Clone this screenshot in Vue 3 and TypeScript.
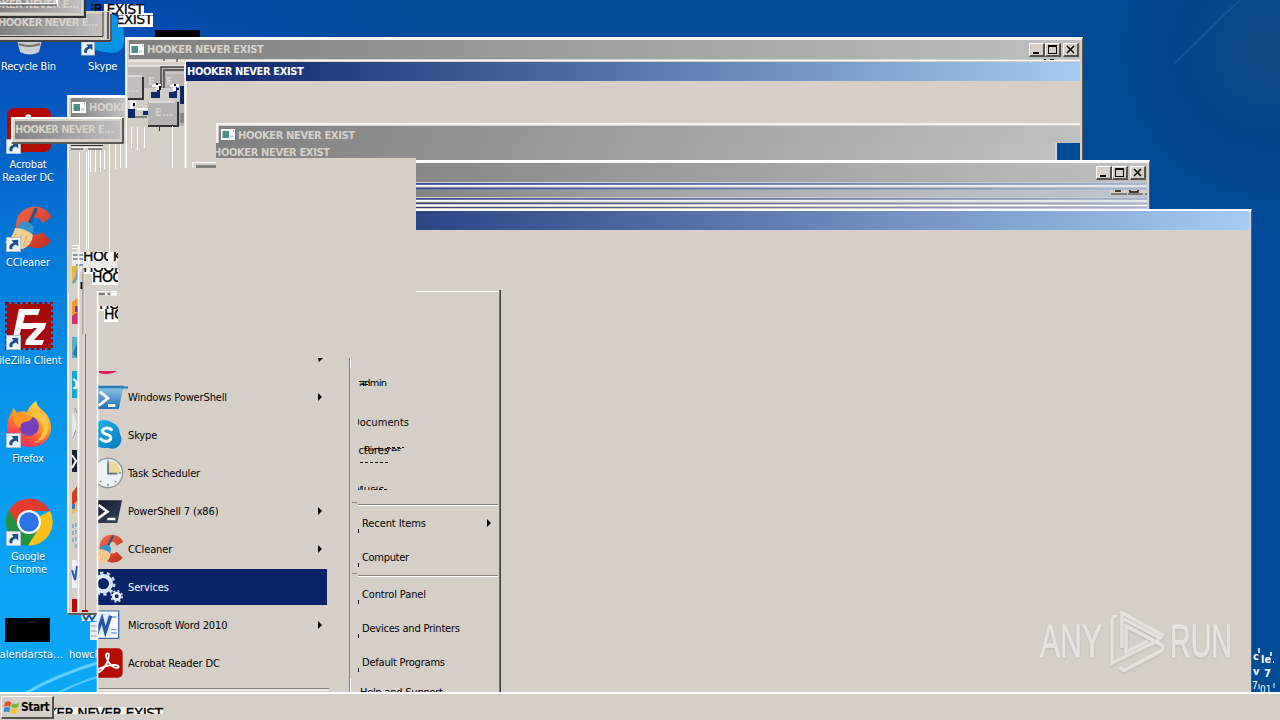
<script setup lang="ts">
interface MenuEntry { label: string; icon: string; arrow?: boolean; active?: boolean }
const programs: MenuEntry[] = [
  { label: 'Windows PowerShell', icon: 'wps', arrow: true },
  { label: 'Skype', icon: 'skype' },
  { label: 'Task Scheduler', icon: 'clock' },
  { label: 'PowerShell 7 (x86)', icon: 'ps7', arrow: true },
  { label: 'CCleaner', icon: 'cc', arrow: true },
  { label: 'Services', icon: 'gears', active: true },
  { label: 'Microsoft Word 2010', icon: 'word', arrow: true },
  { label: 'Acrobat Reader DC', icon: 'pdf' },
]
interface Shortcut { lines: string[]; icon: string; cls: string }
const shortcuts: Shortcut[] = [
  { lines: ['Acrobat', 'Reader DC'], icon: 'pdf', cls: 's1' },
  { lines: ['CCleaner'], icon: 'cc', cls: 's2' },
  { lines: ['FileZilla Client'], icon: 'fz', cls: 's3' },
  { lines: ['Firefox'], icon: 'ff', cls: 's4' },
  { lines: ['Google', 'Chrome'], icon: 'chrome', cls: 's5' },
]
const title = 'HOOKER NEVER EXIST'
const whiteLines: number[][] = [
  [79, 152, 250], [86, 152, 250], [88, 150, 250], [109, 150, 266],
  [90, 150, 172], [95, 150, 172], [100, 150, 172], [104, 150, 169], [109, 144, 169], [115, 144, 169], [120, 144, 169],
  [131, 127, 148], [137, 127, 150], [144, 127, 148], [172, 126, 169],
]
const stripes: [number, string][] = [
  [182, '#d9d9e4'], [183, '#34449a'], [184, '#4a66ac'], [185, '#fff'], [186, '#d5cfc8'], [188, '#34489b'], [189, '#6380b5'],
  [197, '#dcd9d6'], [198, '#34449a'], [199, '#6670a4'], [200, '#fff'], [201, '#d5cfc8'], [203, '#343c88'], [204, '#d5cfc8'],
  [205, '#fff'], [206, '#d5cfc8'], [207, '#343c88'], [208, '#d5cfc8'],
]
</script>

<template>
  <div class="desktop">
    <svg width="0" height="0" class="defs">
      <defs>
        <linearGradient id="gInactive" x1="0" x2="1"><stop offset="0" stop-color="#808080" /><stop offset="1" stop-color="#c0c0c0" /></linearGradient>
        <linearGradient id="gSkype" x1="0" y1="0" x2="1" y2="1"><stop offset="0" stop-color="#22b9f0" /><stop offset="1" stop-color="#0778bb" /></linearGradient>
        <linearGradient id="gFox" x1=".8" y1="0" x2=".3" y2="1"><stop offset="0" stop-color="#ffe14a" /><stop offset=".45" stop-color="#ff9a28" /><stop offset=".8" stop-color="#ff4546" /><stop offset="1" stop-color="#e22c77" /></linearGradient>
        <linearGradient id="gWps" x1="0" y1="0" x2="0" y2="1"><stop offset="0" stop-color="#8cc6e8" /><stop offset="1" stop-color="#1f6fb4" /></linearGradient>
        <linearGradient id="gCc" x1="0" y1="0" x2="1" y2="1"><stop offset="0" stop-color="#f26a4c" /><stop offset="1" stop-color="#c52a1c" /></linearGradient>
        <linearGradient id="gDark" x1="0" y1="0" x2="1" y2="1"><stop offset="0" stop-color="#10162a" /><stop offset="1" stop-color="#37445e" /></linearGradient>
      </defs>
      <symbol id="pdf" viewBox="0 0 48 48">
        <rect x="2" y="2" width="44" height="44" rx="7" fill="#b30b00" />
        <path d="M22 10q4-2 3 5c-1 7-6 16-12 21q-5 4-5 0c1-4 12-8 22-9 8-1 12 2 9 4-5 2-14-5-17-14-1-3-1-6 0-7z" fill="none" stroke="#fff" stroke-width="2.7" />
      </symbol>
      <symbol id="cc" viewBox="0 0 48 48">
        <path d="M47 13Q39 0 26 3C11 6 8 22 14 34c7 12 23 14 32 3l-9-9q-6 5-11 1c-5-5-3-13 2-15q6-2 9 5z" fill="url(#gCc)" />
        <path d="M31 5l-9 19" stroke="#29577e" stroke-width="3" stroke-linecap="round" />
        <path d="M15 19q8-4 14 4l-2 8-16-5z" fill="#3595cb" />
        <path d="M10 24q10 0 18 7-1 10-10 14Q8 46 0 38q7-2 10-14z" fill="#f0cd91" />
        <path d="M11 29L7 40M17 30l-3 12M22 32l-4 10" stroke="#d9ad70" />
      </symbol>
      <symbol id="fz" viewBox="0 0 48 48">
        <rect x="2" y="2" width="44" height="44" fill="#a80b0d" /><rect x="1" y="1" width="46" height="46" fill="none" stroke="#8d0808" stroke-width="2" stroke-dasharray="3 2.5" />
        <path d="M14 7h21l-2 6H20l-2 8h12l-2 6H16l-3 13H7z" fill="#fff" />
        <path d="M24 21h17l-1 5-11 12h10l-2 5H20l1-5 11-12h-9z" fill="#fff" />
      </symbol>
      <symbol id="ff" viewBox="0 0 48 48">
        <path d="M31 1q1 5 5 8c14 10 13 29-1 36C21 51 4 43 2 29q0-11 5-17l1-4q3 2 4 5 5-3 10-1 3-7 9-11z" fill="url(#gFox)" />
        <circle cx="24" cy="26" r="10" fill="#7440bd" />
        <path d="M6 14q9-4 16 1l6 1q-1 5-8 6-6 1-4 6Q8 26 6 14z" fill="#ff9427" />
        <path d="M25 16q13 0 13 14-1 9-10 13c18-2 20-23 7-31q-5-2-10 4z" fill="#ffc53d" />
      </symbol>
      <symbol id="chrome" viewBox="0 0 48 48">
        <path d="M24 24L45 13A23.5 23.5 0 0 1 23 47.500z" fill="#fbc116" />
        <path d="M24 24L34 30 23 47.500A23.500 23.500 0 0 1 4 12z" fill="#229342" />
        <path d="M4 12l10 17 10-16h21Q38 .5 24 .5 11 1 4 12z" fill="#e33b2e" />
        <circle cx="24" cy="24" r="12" fill="#fff" /><circle cx="24" cy="24" r="9.800" fill="#2c73e8" />
      </symbol>
      <symbol id="wps" viewBox="0 0 48 48">
        <path d="M4 9h43l-7 33H-4z" fill="url(#gWps)" /><path d="M3 7h49v4H3z" fill="#2c7dbc" />
        <path d="M12 16l12 10-14 11M24 37h11" fill="none" stroke="#fff" stroke-width="4" />
      </symbol>
      <symbol id="skype" viewBox="0 0 48 48">
        <path d="M4 8Q16-3 29 5q12 4 13 18c7 13-5 26-18 20Q4 46 2 28-3 17 4 8z" fill="url(#gSkype)" />
        <path d="M29 16q-4-4-10-2-7 4 0 8l6 2q6 4 1 8-7 4-13-2" fill="none" stroke="#fff" stroke-width="4.500" stroke-linecap="round" />
      </symbol>
      <symbol id="clock" viewBox="0 0 48 48">
        <circle cx="24" cy="24" r="22" fill="#edf1f2" stroke="#8c9396" stroke-width="2" /><path d="M25 24V6q17 1 18 18z" fill="#edd69a" />
        <path d="M24 8v17h14" fill="none" stroke="#58697a" stroke-width="2.500" />
        <path d="M24 4v4M24 40v4M40 24h4M12 38l2-2M36 38l-2-2" stroke="#849098" stroke-width="2" />
      </symbol>
      <symbol id="ps7" viewBox="0 0 48 48">
        <path d="M5 8h40l-7 34H-2z" fill="url(#gDark)" /><path d="M10 15l13 10L8 36M23 36h12" fill="none" stroke="#fff" stroke-width="4" />
      </symbol>
      <symbol id="gears" viewBox="0 0 48 48">
        <circle cx="17" cy="19" r="11.500" fill="none" stroke="#dcecf8" stroke-width="6" />
        <circle cx="17" cy="19" r="16" fill="none" stroke="#c3d8e9" stroke-width="4.500" stroke-dasharray="5 5" />
        <circle cx="37" cy="38" r="5" fill="none" stroke="#e9f1f7" stroke-width="4" />
        <circle cx="37" cy="38" r="8" fill="none" stroke="#c3d5e5" stroke-width="3" stroke-dasharray="3.200 3.100" />
      </symbol>
      <symbol id="word" viewBox="0 0 48 48">
        <path d="M8 3h32v41H8z" fill="#fbfdff" stroke="#3764ad" stroke-width="1.800" /><path d="M27 12h10M28 31h9M28 36h9" stroke="#7aa1d6" stroke-width="2" />
        <path d="M0 8l28-3v36L0 37z" fill="#deebfa" /><path d="M3 13l6 19 6-17 5 19 8-24" fill="none" stroke="#2356a8" stroke-width="5" />
      </symbol>
      <symbol id="link" viewBox="0 0 16 16">
        <rect x=".5" y=".5" width="15" height="15" fill="#eef3f7" stroke="#aebdc9" />
        <path d="M4 13Q2 8 8 6L6 3.500 13 3v7l-2.300-2Q6 9 7 13z" fill="#204f8e" />
      </symbol>
      <symbol id="winIcon" viewBox="0 0 14 11">
        <rect width="14" height="11" fill="#fff" /><rect x="1.500" y="2" width="6.500" height="7" fill="#4b8f88" /><path d="M9 7.500h3" stroke="#bcd" stroke-width="2" /><path d="M12 2h1" stroke="#567" />
      </symbol>
    </svg>

    <svg class="layer" viewBox="0 0 1280 720">
      <g fill="none" stroke="#9eeaff">
        <path d="M26 693Q55 676 97 663" stroke-width="3" opacity=".6" /><path d="M58 693Q75 684 97 677" stroke-width="2" opacity=".5" />
        <path d="M1175 63L1219 20 1240 0" stroke="#3a7fc0" stroke-width="2" opacity=".25" />
      </g>
      <path d="M17 40h25l-3 12q-9 5-19 0z" fill="#c9cdcf" /><path d="M19 44q10 4 21 0" stroke="#77736c" stroke-width="2" fill="none" />
      <path d="M82 40Q84 15 105 12q18 2 19 25 1 15-12 16-20-1-30-13z" fill="#0794e6" />
      <rect x="155" y="30" width="45" height="8" fill="#000" />
      <rect x="104" y="4" width="40" height="9" fill="#fff" /><rect x="118" y="13" width="35" height="14" fill="#fff" />
      <svg x="91" y="4" width="55" height="11"><text class="frag" x="-93" y="10" textLength="146">{{ title }}</text></svg>
      <svg x="118" y="15" width="36" height="12"><text class="frag" x="-111" y="9" textLength="146">{{ title }}</text></svg>
      <use href="#link" x="81" y="41" width="14" height="15" />
      <rect x="5" y="618" width="45" height="24" fill="#000" /><path d="M27 622h10" stroke="#333" />
      <path d="M80 608h20v13H82zM90 622h8v18h-8z" fill="#e7f1fb" /><path d="M83 615l3 5 3-5 3 5 4-6" fill="none" stroke="#2455a4" stroke-width="2" /><path d="M91 626h6m-6 5h6m-6 5h6" stroke="#999" />
    </svg>

    <span class="dlabel bin">Recycle Bin</span>
    <span class="dlabel sky">Skype</span>
    <div v-for="s in shortcuts" :key="s.cls" class="shortcut" :class="s.cls">
      <svg class="dicon"><use :href="'#' + s.icon" /></svg>
      <svg class="link"><use href="#link" /></svg>
      <span v-for="l in s.lines" :key="l" class="dline">{{ l }}</span>
    </div>
    <span class="dlabel cal">calendarsta...</span>
    <span class="dlabel how">howcl</span>

    <section class="win win-left"><header class="bar"><svg class="app"><use href="#winIcon" /></svg>{{ title }}</header></section>
    <section class="win win-top">
      <header class="bar"><svg class="app"><use href="#winIcon" /></svg>{{ title }}
        <span class="ctl"><i class="b min"></i><i class="b max"></i><i class="b close"><svg viewBox="0 0 10 10"><path d="M1 1l7 7M8 1L1 8" /></svg></i></span>
      </header>
    </section>

    <svg class="layer" viewBox="0 0 1280 720">
      <path d="M186 60.500H1080" stroke="#fff" /><path d="M1044 59.500h2m4 0h4" stroke="#222" />
      <rect x="128" y="66" width="56" height="60" fill="#b8b5b1" />
      <path d="M128 61h56M128 66h56" stroke="#fff" /><path d="M164 59v2M177 59v3" stroke="#222" />
      <path d="M161 94V67h23M164 91V70h20" fill="none" stroke="#444" stroke-width="1.500" /><path d="M166 73h18" stroke="#ddd" />
      <path d="M144 88h40v13h-40zM128 100h20v26h-20z" fill="#d0ccc6" />
      <path d="M151 92h6v-6h3v12h-9zM169 92h5v-6h3v12h-8zM128 109h7v9h-7zM143 111h6v4h-6zM180 86h4v18h-4z" fill="#0d276b" />
      <path d="M152 84h9v2h-2v4h-3v-3h-4zM170 84h9v3h-3v4h-3v-4h-3zM130 101h6v5h-3v3h-3zM137 108h12v2h-12z" fill="#fff" />
      <path d="M156 83h2v2h-2zM159 86h2v4h-2zM174 84h2v2h-2zM177 88h2v2h-2zM133 103h2v3h-2z" fill="#111" />
      <text class="mini" x="148" y="85">E</text><text class="mini" x="166" y="85">E</text>
      <path d="M128 76h14v22h-14z" fill="#c0bdba" /><path d="M143 77v22h-15" fill="none" stroke="#333" stroke-width="2" /><path d="M128 76h14" stroke="#fff" /><text class="mini" x="127" y="92">...</text>
      <path d="M148 101h29v24h-29z" fill="#b5b3b1" /><path d="M149 102h26" stroke="#fff" /><path d="M178 102v24h-30" fill="none" stroke="#333" stroke-width="2" /><text class="mini" x="155" y="116">E...</text>
      <rect x="180" y="113" width="4" height="10" fill="#888" /><path d="M128 117h19M159.500 126v5" stroke="#333" />
      <rect x="68" y="168" width="348" height="125" fill="#d5cfc8" />
      <rect x="127" y="127" width="57" height="50" fill="#d5cfc8" /><rect x="184" y="81" width="896" height="80" fill="#d5cfc8" />
      <path d="M185.500 61v108" stroke="#fff" stroke-width="2" /><path d="M159.500 126v5" stroke="#333" />
      <path v-for="(l, i) in whiteLines" :key="i" :d="`M${l[0] + .5} ${l[1]}V${l[2]}`" stroke="#fff" />
      <path d="M126.500 127v42" stroke="#fff" />
      <path d="M71 145.500h32M71 149h12m5 0h14" stroke="#333" /><path d="M72 147.500h30" stroke="#fff" />
      <path d="M192 162.500h24M193 163v6" stroke="#fff" /><path d="M196 165h20v3h-20z" fill="#808080" /><path d="M204 168.500h12" stroke="#fff" />
      <path d="M216 124h864M217 124v19" stroke="#fff" stroke-width="1.500" />
      <rect x="219" y="126" width="861" height="17" fill="url(#gInactive)" /><rect x="216" y="143" width="841" height="18" fill="url(#gInactive)" />
      <rect x="1055" y="143" width="2" height="18" fill="#ccd5de" /><rect x="1057" y="143" width="23" height="17" fill="#004b98" />
      <use href="#winIcon" x="221" y="129" width="14" height="11" />
      <svg x="216" y="143" width="130" height="18"><text class="ttl" x="-3" y="13" textLength="117">{{ title }}</text></svg>
      <text class="ttl" x="238" y="139" textLength="117">{{ title }}</text>
    </svg>
    <header class="bar navy">{{ title }}</header>

    <section class="win win-mid">
      <header class="bar"><span class="ctl"><i class="b min"></i><i class="b max"></i><i class="b close"><svg viewBox="0 0 10 10"><path d="M1 1l7 7M8 1L1 8" /></svg></i></span></header>
    </section>
    <svg class="layer" viewBox="0 0 1280 720">
      <defs><linearGradient id="gFade" x1="0" x2="1"><stop offset="0" stop-color="#c0c0c0" stop-opacity="0" /><stop offset="1" stop-color="#bcc6d4" stop-opacity=".85" /></linearGradient></defs>
      <rect x="400" y="182" width="747" height="27" fill="url(#gInactive)" />
      <rect v-for="s in stripes" :key="s[0]" x="400" :y="s[0]" width="747" height="1" :fill="s[1]" />
      <rect x="400" y="182" width="747" height="27" fill="url(#gFade)" />
      <path d="M400 186h747M400 201h747M400 205.500h747" stroke="#fff" />
      <path d="M1110 190h37v4h-37z" fill="#d5cfc8" /><path d="M1111 194h16m1 0h15m2 0h2" stroke="#333" /><path d="M1115 191h6m9-1v2h8v-2" stroke="#111" stroke-width="1.500" fill="none" />
    </svg>
    <section class="win win-front"><header class="bar active"></header></section>
    <div class="blank"></div>

    <section class="menu">
      <div class="programs">
        <div v-for="m in programs" :key="m.label" class="row" :class="{ on: m.active }">
          <svg class="micon" :class="m.icon"><use :href="'#' + m.icon" /></svg>
          <span>{{ m.label }}</span><i v-if="m.arrow" class="arrow"></i>
        </div>
      </div>
    </section>

    <svg class="layer" viewBox="0 0 1280 720">
      <path d="M416 291.500h83" stroke="#fff" /><path d="M499.500 290v402" stroke="#77736c" /><path d="M500.500 290v402" stroke="#404040" />
      <path d="M349.500 358v334" stroke="#85817c" /><path d="M350.500 358v10m0 310v14" stroke="#fff" />
      <path d="M318 358h5l-4 4z" fill="#000" /><path d="M99 371h18q-8 5-18 2z" fill="#e01c5a" /><path d="M121 387.500h7" stroke="#2c7dbc" stroke-width="2" />
      <path d="M358 504.500h140M358 575.500h140M352 502.500h5M352 573.500h5M98 688.500h231" stroke="#85817c" /><path d="M358 505.500h140M358 576.500h140M98 690h231" stroke="#fff" />
      <path d="M487 519l4 4-4 4zM358 529h1v4h-1zM358 563h1v4h-1zM358 600h1v4h-1zM358 634h1v4h-1zM358 668h1v4h-1z" fill="#000" />
      <g class="reg">
        <svg x="358" y="378" width="32" height="8"><text x="1" y="8.500" textLength="28">admin</text></svg><path d="M359 381.500h8M361 384.500h7" stroke="#111" />
        <svg x="358" y="415" width="54" height="13"><text x="-6" y="11" textLength="57">Documents</text></svg>
        <svg x="358" y="443" width="34" height="13"><text x="-8" y="11" textLength="39">Pictures</text></svg>
        <svg x="362" y="445" width="45" height="6"><text x="2" y="9" textLength="38">Pictures</text></svg>
        <path d="M387 447.500h17M360 462.500h29" stroke="#111" stroke-dasharray="3 2" />
        <svg x="358" y="486" width="35" height="4"><text x="-3" y="7" textLength="29">Music</text></svg><path d="M374 489.500h15" stroke="#111" stroke-dasharray="3 2" />
        <text x="362" y="527" textLength="64">Recent Items</text><text x="362" y="561" textLength="47">Computer</text>
        <text x="362" y="598" textLength="64">Control Panel</text><text x="362" y="632" textLength="98">Devices and Printers</text>
        <text x="362" y="666" textLength="83">Default Programs</text>
        <svg x="358" y="684" width="90" height="8"><text x="2" y="12" textLength="83">Help and Support</text></svg>
      </g>

      <g>
        <rect x="72" y="252" width="45" height="20" fill="#eceae7" />
        <path d="M72 245.500h7M72 248.500h7" stroke="#fff" />
        <path d="M73 255h10M73 259h10M76 265h7" stroke="#667b99" stroke-width="1.500" />
        <rect x="83" y="252" width="35" height="9" fill="#fff" /><rect x="82" y="268" width="36" height="6" fill="#fff" /><rect x="92" y="272" width="26" height="13" fill="#fff" />
        <svg x="83" y="252" width="25" height="9"><text class="frag" x="0" y="9" textLength="146">{{ title }}</text></svg>
        <svg x="113" y="252" width="5" height="9"><text class="frag" x="-31" y="9" textLength="146">{{ title }}</text></svg>
        <svg x="82" y="268" width="36" height="4"><text class="frag" x="1" y="4" textLength="146">{{ title }}</text></svg>
        <svg x="92" y="272" width="26" height="13"><text class="frag" x="0" y="10" textLength="146">{{ title }}</text></svg>
        <path d="M72 266h8l-2 6-5 9-1-3zM72 270h3l2 9-2 4h-3z" fill="#eab63e" /><path d="M73 283q5-5 5-15" stroke="#67a2cc" stroke-width="2.500" fill="none" />
        <path d="M98 291.500h19" stroke="#fff" /><path d="M99 294h6m3 0h2" stroke="#222" /><path d="M105 294h2m4 0h6" stroke="#fff" stroke-width="3" />
        <rect x="98" y="306" width="20" height="5" fill="#fff" /><rect x="104" y="309" width="14" height="13" fill="#fff" />
        <svg x="98" y="306" width="20" height="3"><text class="frag" x="1" y="3" textLength="146">{{ title }}</text></svg>
        <svg x="104" y="309" width="14" height="13"><text class="frag" x="0" y="10" textLength="146">{{ title }}</text></svg>
        <path d="M81.500 282v7" stroke="#111" stroke-width="2" /><path d="M83 268v66M85.500 334v276" stroke="#77736c" /><path d="M84 270v340" stroke="#ddd9d3" />
        <path d="M72 302l6-4v23q-5 0-6-7z" fill="#ff9224" /><path d="M72 316l6-4v12h-6z" fill="#da2c70" /><path d="M75 306h3v6h-3z" fill="#693bb1" />
        <path d="M72 337h5v21h-5z" fill="#5eabc7" /><path d="M73 354l4-11v15z" fill="#2777a8" />
        <path d="M72 371h5v27h-5z" fill="#11a5db" /><path d="M73 379q5 2 3 9h-3" fill="none" stroke="#fff" stroke-width="2" />
        <path d="M72 412q7 8 3 25h-3z" fill="#e4e9eb" /><path d="M75 408l2 5M76 430l-3 8" stroke="#7999b2" />
        <path d="M72 450h5v22h-5z" fill="#142237" /><path d="M72 455l4 6-4 7" fill="none" stroke="#fff" stroke-width="2" />
        <path d="M72 493l5-7v17l-5 3z" fill="#d73a24" /><path d="M72 506l5-5v10l-5 3z" fill="#e9b777" /><path d="M72 504h3v5h-3z" fill="#347fb8" />
        <path d="M73 524v20m3-21v26" stroke="#8faed0" stroke-width="2" stroke-dasharray="4 3" />
        <path d="M72 560h5v28h-5z" fill="#e8f1fc" /><path d="M72 570l3 10 2-14" fill="none" stroke="#2859a9" stroke-width="2" /><rect x="72" y="599" width="5" height="13" fill="#b00f0b" />
        <path d="M82 611h6" stroke="#b00f0b" stroke-width="2" />
        <path d="M78.500 246v366" stroke="#fff" stroke-width="1.500" /><path d="M97.500 291v401" stroke="#fff" stroke-width="1.500" />
      </g>
      <g class="tip">
        <path d="M0 11h112v31H0z" fill="#d5cfc8" /><path d="M111 14v27H0M108 12v27" fill="none" stroke="#333" stroke-width="1.500" />
        <path d="M0 14h102v21H0z" fill="url(#gInactive)" /><path d="M0 36.500h103V12M0 41h110" fill="none" stroke="#303030" /><text class="ttl" x="-2" y="26" textLength="100">HOOKER NEVER E...</text>
        <path d="M0 0h86v18H0z" fill="#b5b3b1" /><path d="M0 0h80v12H0z" fill="url(#gInactive)" /><text class="ttl" x="-22" y="8" textLength="101">HOOKER NEVER E...</text><path d="M85 0v17H0" fill="none" stroke="#333" stroke-width="2" /><path d="M82 0v14H0" fill="none" stroke="#d9d5cf" stroke-width="2" /><path d="M57 0v4H0" fill="none" stroke="#fff" stroke-width="2" /><path d="M57 5H0" stroke="#333" />
        <path d="M11 117h113v27H11z" fill="#d5cfc8" /><path d="M12 142V118h111" fill="none" stroke="#fff" stroke-width="2" /><path d="M123 118v25H12" fill="none" stroke="#333" stroke-width="1.500" />
        <rect x="15" y="121" width="105" height="18" fill="url(#gInactive)" /><text class="ttl" x="15" y="133" textLength="99">HOOKER NEVER E...</text>
      </g>

      <g class="mark">
        <text x="1040" y="657" textLength="62" lengthAdjust="spacingAndGlyphs">ANY</text><text x="1170" y="657" textLength="62" lengthAdjust="spacingAndGlyphs">RUN</text>
        <path d="M1117 617q-5-2-5 4v42l47-23M1122 648v-35l40 22q-1 5-4 2l-34-18M1120 667q3 5 7 2l34-18q4-4-1-7l-34-18v26l22-11" />
      </g>
      <g class="build"><svg x="1252" y="648" width="28" height="44"><text x="1" y="12">c</text><text x="9" y="15">le</text><path d="M7 0v5m12-1v4m2 6h1" stroke="#fff" stroke-width="1.500" /><text x="1" y="27">v</text><path d="M0 18h10v3H0z" fill="#004b98" /><text x="12" y="29">7</text><text class="small" x="0" y="41">7</text><path d="M7 36v5M22 35v5" stroke="#fff" /><text class="small" x="8" y="45">01</text></svg></g>
    </svg>

    <footer class="taskbar">
      <button class="start"><svg viewBox="0 0 18 16"><path d="M1 3q4-3 7 0L7 8Q4 6 0 8z" fill="#e65327" /><path d="M9 4q4 2 8-1l-1 5q-4 2-8 0z" fill="#76b82f" /><path d="M0 9q4-2 7 0l-1 5q-3-2-6 0z" fill="#3689d0" /><path d="M8 9q4 2 8 0l-1 5q-4 3-8 0z" fill="#fac42d" /></svg>Start</button>
      <svg class="ghost"><rect width="109" height="7" y="0" fill="#f5f3f0" /><text class="frag" x="-37" y="11" textLength="146">{{ title }}</text></svg>
    </footer>
  </div>
</template>

<style>
html, body { margin: 0; overflow: hidden; background: #004b98; }
</style>
<style scoped>
.desktop { position: relative; width: 1280px; height: 720px; overflow: hidden; font: 11px "DejaVu Sans Condensed", "DejaVu Sans", sans-serif; font-stretch: condensed; color: #000;
  background: radial-gradient(circle at 1270px 50px, #104a82 0, #04468b 90px, transparent 190px), linear-gradient(90deg, transparent 130px, #004b98 420px), linear-gradient(#064aae 0, #0555bd 90px, #0573d5 220px, #0692e8 380px, #0aa3f5 570px, #0ca8f8 692px); }
.defs, .layer { position: absolute; left: 0; top: 0; }
.layer { width: 1280px; height: 720px; }
.layer text { white-space: pre; }
.frag { font: 14px "DejaVu Sans", sans-serif; fill: #000; stroke: #000; stroke-width: .3px; }
.ttl, .mini { font: bold 11px "DejaVu Sans Condensed", sans-serif; font-stretch: condensed; fill: #d5d1cb; }
.reg text { font: 11px "DejaVu Sans Condensed", sans-serif; font-stretch: condensed; fill: #000; }
.dlabel { position: absolute; color: #fff; line-height: 13px; white-space: nowrap; text-shadow: 0 1px 1px #0358; letter-spacing: -.1px; }
.bin { left: 1px; top: 60px; letter-spacing: -.2px; }
.sky { left: 88px; top: 60px; }
.cal { left: -6px; top: 648px; letter-spacing: .1px; }
.how { left: 69px; top: 648px; }
.shortcut { position: absolute; left: -22px; width: 100px; display: flex; flex-direction: column; align-items: center; color: #fff; line-height: 13px; }
.dicon { width: 48px; height: 48px; margin: 2px 0 4px 2px; }
.link { position: absolute; left: 28px; top: 35px; width: 15px; height: 15px; }
.dline { white-space: nowrap; letter-spacing: -.15px; text-shadow: 0 1px 1px #0358; }
.s1 { top: 104px; } .s2 { top: 202px; } .s3 { top: 300px; } .s4 { top: 398px; } .s5 { top: 496px; }
.win { position: absolute; box-sizing: border-box; background: #d5cfc8; border: 2px solid #fff; border-right-color: #605d59; border-bottom-color: #605d59; border-left-color: #e8e5e0; border-width: 2px 1px 2px 1px; box-shadow: inset 1px 1px #f7f5f2; }
.win-left { left: 67px; top: 95px; width: 60px; height: 520px; border-right: 0; clip-path: polygon(0 0, 100% 0, 100% 200px, 30px 200px, 30px 100%, 0 100%); }
.win-top { left: 125px; top: 37px; width: 958px; height: 140px; }
.win-mid { left: 300px; top: 160px; width: 850px; height: 90px; }
.win-front { left: 200px; top: 209px; width: 1052px; height: 500px; }
.bar { display: flex; align-items: center; box-sizing: border-box; height: 19px; margin: 1px 2px 0 3px; background: linear-gradient(90deg, #808080, #c0c0c0); color: #d5d1cb; font-weight: bold; letter-spacing: -.37px; white-space: nowrap; overflow: hidden; }
.app { width: 14px; height: 11px; margin: 0 3px 0 1px; flex: none; }
.ctl { margin-left: auto; display: flex; padding-right: 1px; }
.b { position: relative; box-sizing: border-box; width: 16px; height: 14px; background: #d5cfc8; border: 1px solid #fff; border-right: 2px solid #55524e; border-bottom: 2px solid #55524e; }
.min::after { content: ""; position: absolute; left: 3px; bottom: 1px; width: 6px; height: 2px; background: #000; }
.max::after { content: ""; position: absolute; box-sizing: border-box; left: 2px; top: 1px; width: 9px; height: 9px; border: 1px solid #000; border-top-width: 2px; }
.close { margin-left: 2px; }
.close svg { display: block; width: 10px; height: 10px; margin: 1px 0 0 2px; fill: none; stroke: #000; stroke-width: 1.6; }
.navy { position: absolute; left: 186px; top: 62px; width: 894px; margin: 0; padding-left: 1px; background: linear-gradient(90deg, #0a246a, #a6caf0); color: #fff; }
.win-mid .bar { height: 20px; }
.active { margin-top: 0; background: linear-gradient(90deg, #0a246a, #a6caf0); }
.blank { position: absolute; left: 118px; top: 168px; width: 200px; height: 200px; background: #d5cfc8; box-shadow: 98px -10px 0 0 #d5cfc8; }
.menu { position: absolute; left: 97px; top: 291px; width: 404px; height: 401px; background: #d5cfc8; }
.programs { display: flex; flex-direction: column; gap: 2px; padding-top: 78px; width: 251px; height: 323px; margin-left: 1px; overflow: hidden; padding-top: 78px; }
.row { display: flex; flex: none; align-items: center; height: 36px; line-height: 14px; }
.row:first-child { margin-top: 10px; }
.row.on { background: #0a246a; color: #fff; width: 229px; }
.row span { width: 190px; letter-spacing: -.13px; padding-top: 1px; }
.micon { width: 32px; height: 32px; margin: 0 4px 0 -6px; flex: none; overflow: hidden; }
.arrow { border: 4px solid transparent; border-left-color: #000; border-right: 0; }
.mark text { font: 47px "Liberation Sans Narrow", "Liberation Sans", sans-serif; fill: #f0edea; stroke: #f0edea; stroke-width: .8px; opacity: .8; }
.mark { filter: drop-shadow(0 1px 1px #9998); }
.mark path { fill: none; stroke: #eeebe7; stroke-width: 3.5; opacity: .8; }
.build text { font: bold 11px "DejaVu Sans Condensed", sans-serif; fill: #fff; }
.build .small { font-weight: normal; font-size: 10px; }
.taskbar { position: absolute; left: 0; right: 0; top: 692px; height: 28px; box-sizing: border-box; border-top: 2px solid #fff; background: #d5cfc8; display: flex; }
.start { box-sizing: border-box; width: 53px; height: 23px; margin: 2px 0 0 1px; padding: 0 0 0 2px; display: flex; align-items: center; gap: 1px; background: #d5cfc8; border: 1px solid #fff; border-right: 2px solid #55524e; border-bottom: 2px solid #55524e; font: bold 12px "DejaVu Sans Condensed", sans-serif; font-stretch: condensed; letter-spacing: -.5px; color: #000; }
.start svg { width: 16px; height: 16px; flex: none; }
.ghost { width: 110px; height: 7px; margin-top: 13px; overflow: hidden; }
</style>
